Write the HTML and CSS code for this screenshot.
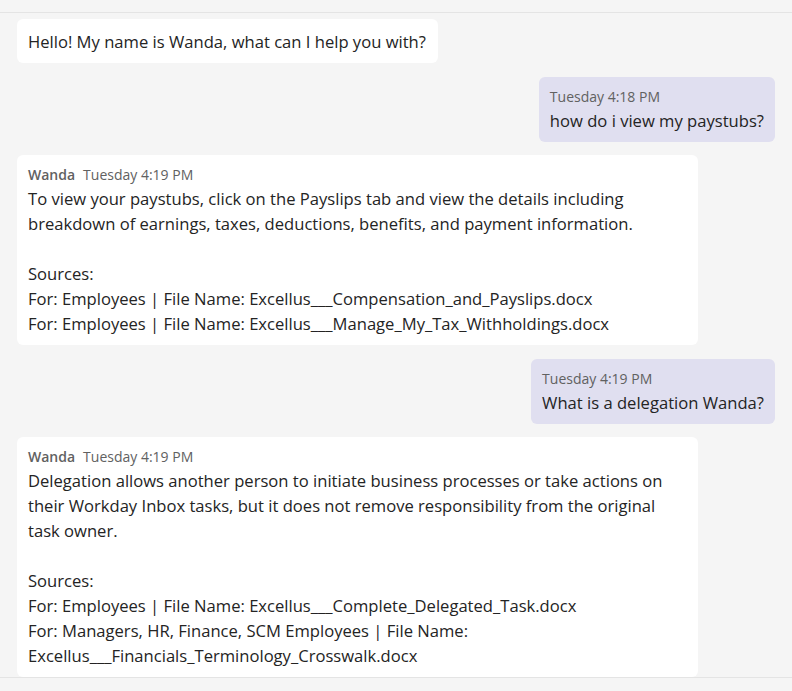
FILE: index.html
```html
<!DOCTYPE html>
<html lang="en">
<head>
<meta charset="utf-8">
<title>Chat with Wanda</title>
<link rel="stylesheet" href="styles.css">
</head>
<body>
<div class="chat">
  <div class="msg msg-bot">
    <div class="bubble bot intro">
      <div class="body">Hello! My name is Wanda, what can I help you with?</div>
    </div>
  </div>
  <div class="msg msg-user">
    <div class="bubble user">
      <div class="meta"><span class="time">Tuesday 4:18 PM</span></div>
      <div class="body">how do i view my paystubs?</div>
    </div>
  </div>
  <div class="msg msg-bot">
    <div class="bubble bot wide">
      <div class="meta"><span class="name">Wanda</span><span class="time">Tuesday 4:19 PM</span></div>
      <div class="body">To view your paystubs, click on the Payslips tab and view the details including breakdown of earnings, taxes, deductions, benefits, and payment information.</div>
      <div class="body blank">&nbsp;</div>
      <div class="body">Sources:</div>
      <div class="body">For: Employees | File Name: Excellus___Compensation_and_Payslips.docx</div>
      <div class="body">For: Employees | File Name: Excellus___Manage_My_Tax_Withholdings.docx</div>
    </div>
  </div>
  <div class="msg msg-user">
    <div class="bubble user">
      <div class="meta"><span class="time">Tuesday 4:19 PM</span></div>
      <div class="body">What is a delegation Wanda?</div>
    </div>
  </div>
  <div class="msg msg-bot">
    <div class="bubble bot wide">
      <div class="meta"><span class="name">Wanda</span><span class="time">Tuesday 4:19 PM</span></div>
      <div class="body">Delegation allows another person to initiate business processes or take actions on their Workday Inbox tasks, but it does not remove responsibility from the original task owner.</div>
      <div class="body blank">&nbsp;</div>
      <div class="body">Sources:</div>
      <div class="body">For: Employees | File Name: Excellus___Complete_Delegated_Task.docx</div>
      <div class="body">For: Managers, HR, Finance, SCM Employees | File Name: Excellus___Financials_Terminology_Crosswalk.docx</div>
    </div>
  </div>
</div>
</body>
</html>
```

FILE: styles.css
```css
html, body {
  margin: 0;
  padding: 0;
  background: #f5f5f5;
}
body {
  font-family: "Open Sans", "Noto Sans", sans-serif;
  color: #242424;
  height: 691px;
  overflow: hidden;
}
.chat {
  margin-top: 12px;
  border-top: 1px solid #e4e4e4;
  border-bottom: 1px solid #e4e4e4;
  padding: 6px 17px 0 17px;
  display: flex;
  flex-direction: column;
  gap: 13.5px;
}
.msg {
  display: flex;
}
.msg-user {
  justify-content: flex-end;
}
.bubble {
  border-radius: 6px;
  padding: 9px 11px 9px 11px;
  box-sizing: border-box;
}
.intro {
  padding-top: 10px;
  padding-bottom: 9px;
  padding-right: 12px;
}
.bot {
  background: #ffffff;
}
.wide {
  width: 681px;
}
.user {
  background: #e0dff0;
}
.meta {
  font-size: 14px;
  line-height: 22px;
  color: #616161;
  white-space: nowrap;
}
.name {
  font-weight: 600;
  margin-right: 8px;
}
.body {
  font-size: 16.6px;
  line-height: 25px;
}
```
